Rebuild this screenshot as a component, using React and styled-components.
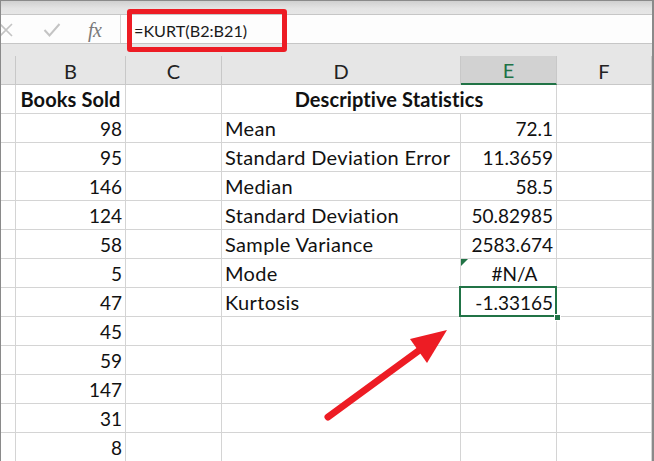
import React from "react";
import styled, { createGlobalStyle, css } from "styled-components";

const Global = createGlobalStyle`
  html, body { margin: 0; padding: 0; background: #ffffff; }
  body { font-family: "Lato", "Open Sans", sans-serif; }
  * { box-sizing: border-box; }
`;

const GREEN = "#217346";
const RED = "#ed1c24";
const GRID = "#d4d4d4";

const Frame = styled.div`
  position: relative;
  width: 654px;
  height: 461px;
  overflow: hidden;
  border-top: 1px solid #8a8a8a;
  border-left: 1px solid #8a8a8a;
  border-right: 2px solid #8a8a8a;
  background: #e6e6e6;
  display: flex;
  flex-direction: column;
`;

const TopStrip = styled.div`
  height: 14px;
  flex: none;
  background: linear-gradient(#d0d0d0, #e4e4e4 60%, #e6e6e6);
  border-bottom: 1px solid #c6c6c6;
`;

const FormulaRow = styled.div`
  height: 29px;
  flex: none;
  display: flex;
  background: #fdfdfd;
  border-bottom: 1px solid #c6c6c6;
`;

const IconArea = styled.div`
  width: 120px;
  flex: none;
  display: flex;
  align-items: center;
  border-right: 1px solid #d6d6d6;
  position: relative;
`;

const IconSlot = styled.div`
  position: absolute;
  left: ${(p) => p.$x}px;
  top: ${(p) => p.$y}px;
  display: flex;
`;

const Fx = styled.span`
  font-family: "Liberation Serif", "DejaVu Serif", serif;
  font-style: italic;
  font-size: 20px;
  line-height: 20px;
  color: #7a7a7a;
  letter-spacing: -0.5px;
`;

const FormulaInput = styled.div`
  flex: 1;
  display: flex;
  align-items: center;
  padding: 3px 0 0 13px;
  font-family: "Lato", sans-serif;
  font-size: 16.2px;
  color: #1a1a1a;
`;

const Gap = styled.div`
  height: 12px;
  flex: none;
`;

const Sheet = styled.div`
  display: grid;
  grid-template-columns: 15px 110px 96px 239px 96px 1fr;
  grid-auto-rows: 29px;
  background: #ffffff;
  flex: none;
`;

const ColHead = styled.div`
  background: ${(p) => (p.$active ? "#d2d2d2" : "#e6e6e6")};
  border-right: 1px solid #c8c8c8;
  border-bottom: ${(p) => (p.$active ? `2px solid ${GREEN}` : "1px solid #c8c8c8")};
  color: ${(p) => (p.$active ? GREEN : "#222")};
  display: flex;
  align-items: center;
  justify-content: center;
  font-size: 20px;
  padding-top: 1px;
`;

const Corner = styled.div`
  background: #e6e6e6;
  border-right: 1px solid #c8c8c8;
  border-bottom: 1px solid #c8c8c8;
`;

const Cell = styled.div`
  position: relative;
  border-right: 1px solid ${GRID};
  border-bottom: 1px solid ${GRID};
  display: flex;
  align-items: flex-end;
  justify-content: ${(p) =>
    p.$align === "right" ? "flex-end" : p.$align === "center" ? "center" : "flex-start"};
  padding: 0 3px 4px ${(p) => (p.$indent ? p.$indent : 3)}px;
  font-size: ${(p) => (p.$num ? 19 : 20)}px;
  letter-spacing: ${(p) => (p.$num ? 0 : p.$bold ? 0.1 : 0.35)}px;
  line-height: 19px;
  color: #111;
  white-space: nowrap;
  font-weight: ${(p) => (p.$bold ? 700 : 400)};
  ${(p) => p.$span && css`grid-column: span ${p.$span};`}
  ${(p) =>
    p.$flag &&
    css`
      &::before {
        content: "";
        position: absolute;
        left: 0;
        top: 0;
        border-top: 7px solid ${GREEN};
        border-right: 7px solid transparent;
      }
    `}
  ${(p) =>
    p.$selected &&
    css`
      &::after {
        content: "";
        position: absolute;
        left: -2px;
        top: -2px;
        right: -1px;
        bottom: -1px;
        border: 2px solid ${GREEN};
        pointer-events: none;
      }
    `}
`;

const FillHandle = styled.span`
  position: absolute;
  right: -5px;
  bottom: -5px;
  width: 7px;
  height: 7px;
  background: ${GREEN};
  border: 1px solid #fff;
  z-index: 2;
`;

const Highlight = styled.div`
  position: absolute;
  left: 126px;
  top: 8px;
  width: 160px;
  height: 43px;
  border: 5px solid ${RED};
  border-radius: 3px;
  pointer-events: none;
`;

const ArrowLayer = styled.svg`
  position: absolute;
  left: 0;
  top: 0;
  pointer-events: none;
`;

const rows = [
  { b: "Books Sold", bBold: true, d: "Descriptive Statistics", header: true },
  { b: "98", d: "Mean", e: "72.1" },
  { b: "95", d: "Standard Deviation Error", e: "11.3659" },
  { b: "146", d: "Median", e: "58.5" },
  { b: "124", d: "Standard Deviation", e: "50.82985" },
  { b: "58", d: "Sample Variance", e: "2583.674" },
  { b: "5", d: "Mode", e: "#N/A", flag: true },
  { b: "47", d: "Kurtosis", e: "-1.33165", selected: true },
  { b: "45" },
  { b: "59" },
  { b: "147" },
  { b: "31" },
  { b: "8" },
];

function XIcon() {
  return (
    <svg width="14" height="14" viewBox="0 0 14 14">
      <path d="M1 1 L13 13 M13 1 L1 13" stroke="#c4c4c4" strokeWidth="1.6" fill="none" />
    </svg>
  );
}

function CheckIcon() {
  return (
    <svg width="18" height="14" viewBox="0 0 18 14">
      <path d="M1.5 7 L6.5 12.5 L16.5 1" stroke="#c4c4c4" strokeWidth="2" fill="none" />
    </svg>
  );
}

export default function App() {
  return (
    <>
      <Global />
      <Frame>
        <TopStrip />
        <FormulaRow>
          <IconArea>
            <IconSlot $x={-2} $y={8}>
              <XIcon />
            </IconSlot>
            <IconSlot $x={42} $y={8}>
              <CheckIcon />
            </IconSlot>
            <IconSlot $x={87} $y={5}>
              <Fx>fx</Fx>
            </IconSlot>
          </IconArea>
          <FormulaInput>=KURT(B2:B21)</FormulaInput>
        </FormulaRow>
        <Gap />
        <Sheet>
          <Corner />
          <ColHead>B</ColHead>
          <ColHead>C</ColHead>
          <ColHead>D</ColHead>
          <ColHead $active>E</ColHead>
          <ColHead>F</ColHead>
          {rows.map((r, i) => (
            <React.Fragment key={i}>
              <Cell />
              <Cell $align={r.bBold ? "center" : "right"} $bold={r.bBold} $num={!r.bBold}>
                {r.b}
              </Cell>
              <Cell />
              {r.header ? (
                <Cell $span={2} $align="center" $bold>
                  {r.d}
                </Cell>
              ) : (
                <>
                  <Cell>{r.d || ""}</Cell>
                  <Cell
                    $num
                    $align={r.e === "#N/A" ? "center" : "right"}
                    $indent={r.e === "#N/A" ? 15 : 3}
                    $flag={r.flag}
                    $selected={r.selected}
                  >
                    {r.e || ""}
                    {r.selected && <FillHandle />}
                  </Cell>
                </>
              )}
              <Cell />
            </React.Fragment>
          ))}
        </Sheet>
        <Highlight />
        <ArrowLayer width="654" height="461" viewBox="0 0 654 461">
          <line
            x1="327"
            y1="416"
            x2="420"
            y2="348"
            stroke={RED}
            strokeWidth="7"
            strokeLinecap="round"
          />
          <polygon points="446,329 409,338 426,362" fill={RED} />
        </ArrowLayer>
      </Frame>
    </>
  );
}
